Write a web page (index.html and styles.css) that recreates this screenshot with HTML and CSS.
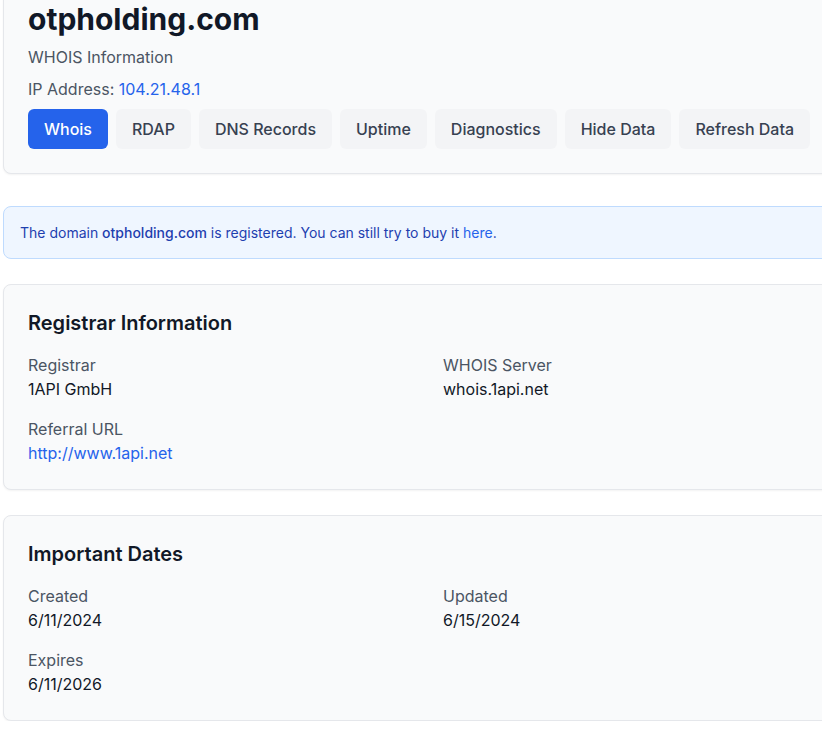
FILE: index.html
```html
<!DOCTYPE html>
<html lang="en">
<head>
<meta charset="utf-8">
<title>otpholding.com - WHOIS Information</title>
<link rel="stylesheet" href="styles.css">
</head>
<body>
<main class="page">
  <section class="card header-card">
    <h1 class="domain">otpholding.com</h1>
    <p class="subtitle">WHOIS Information</p>
    <p class="ip">IP Address: <a class="link" href="#">104.21.48.1</a></p>
    <nav class="tabs">
      <button class="tab active">Whois</button>
      <button class="tab">RDAP</button>
      <button class="tab">DNS Records</button>
      <button class="tab">Uptime</button>
      <button class="tab">Diagnostics</button>
      <button class="tab">Hide Data</button>
      <button class="tab">Refresh Data</button>
    </nav>
  </section>

  <div class="alert">
    The domain <strong>otpholding.com</strong> is registered. You can still try to buy it <a class="alert-link" href="#">here</a>.
  </div>

  <section class="card info-card">
    <h2 class="card-title">Registrar Information</h2>
    <div class="grid">
      <div class="field">
        <div class="label">Registrar</div>
        <div class="value">1API GmbH</div>
      </div>
      <div class="field">
        <div class="label">WHOIS Server</div>
        <div class="value">whois.1api.net</div>
      </div>
      <div class="field">
        <div class="label">Referral URL</div>
        <a class="value link" href="#">http://www.1api.net</a>
      </div>
    </div>
  </section>

  <section class="card info-card">
    <h2 class="card-title">Important Dates</h2>
    <div class="grid">
      <div class="field">
        <div class="label">Created</div>
        <div class="value">6/11/2024</div>
      </div>
      <div class="field">
        <div class="label">Updated</div>
        <div class="value">6/15/2024</div>
      </div>
      <div class="field">
        <div class="label">Expires</div>
        <div class="value">6/11/2026</div>
      </div>
    </div>
  </section>
</main>
</body>
</html>
```
FILE: styles.css
```css
html, body {
  margin: 0;
  padding: 0;
  overflow: hidden;
  background: #ffffff;
}
body {
  font-family: Inter, "Noto Sans", sans-serif;
  color: #111827;
  font-size: 16px;
  line-height: 24px;
}
.page {
  margin-top: -24px;
  padding-left: 3px;
  width: 864px;
}
.card {
  background: #f9fafb;
  border: 1px solid #e5e7eb;
  border-radius: 8px;
  padding: 24px;
  box-shadow: 0 1px 2px rgba(0, 0, 0, 0.05);
}
.domain {
  margin: 0;
  font-size: 30px;
  line-height: 36px;
  font-weight: 700;
  color: #111827;
}
.subtitle {
  margin: 8px 0 0;
  color: #4b5563;
}
.ip {
  margin: 8px 0 0;
  color: #4b5563;
}
.link {
  color: #2563eb;
  text-decoration: none;
}
.tabs {
  margin-top: 8px;
  display: flex;
  gap: 8px;
}
.tab {
  font-family: Inter, "Noto Sans", sans-serif;
  font-size: 16px;
  line-height: 24px;
  font-weight: 500;
  color: #374151;
  background: #f3f4f6;
  border: none;
  border-radius: 6px;
  padding: 8px 16px;
  white-space: nowrap;
}
.tab.active {
  background: #2563eb;
  color: #ffffff;
}
.alert {
  margin-top: 32px;
  background: #eff6ff;
  border: 1px solid #bfdbfe;
  border-radius: 8px;
  padding: 16px;
  font-size: 14px;
  line-height: 19px;
  color: #1e40af;
}
.alert strong {
  font-weight: 500;
}
.alert-link {
  color: #2563eb;
  text-decoration: none;
}
.info-card {
  margin-top: 25px;
}
.card-title {
  margin: 0 0 16px;
  font-size: 20px;
  line-height: 28px;
  font-weight: 600;
  color: #111827;
}
.grid {
  display: grid;
  grid-template-columns: 399px 399px;
  column-gap: 16px;
  row-gap: 16px;
}
.field {
  display: flex;
  flex-direction: column;
  align-items: flex-start;
}
.label {
  color: #4b5563;
}
.value {
  font-weight: 400;
  color: #111827;
}
.value.link {
  color: #2563eb;
}
```
